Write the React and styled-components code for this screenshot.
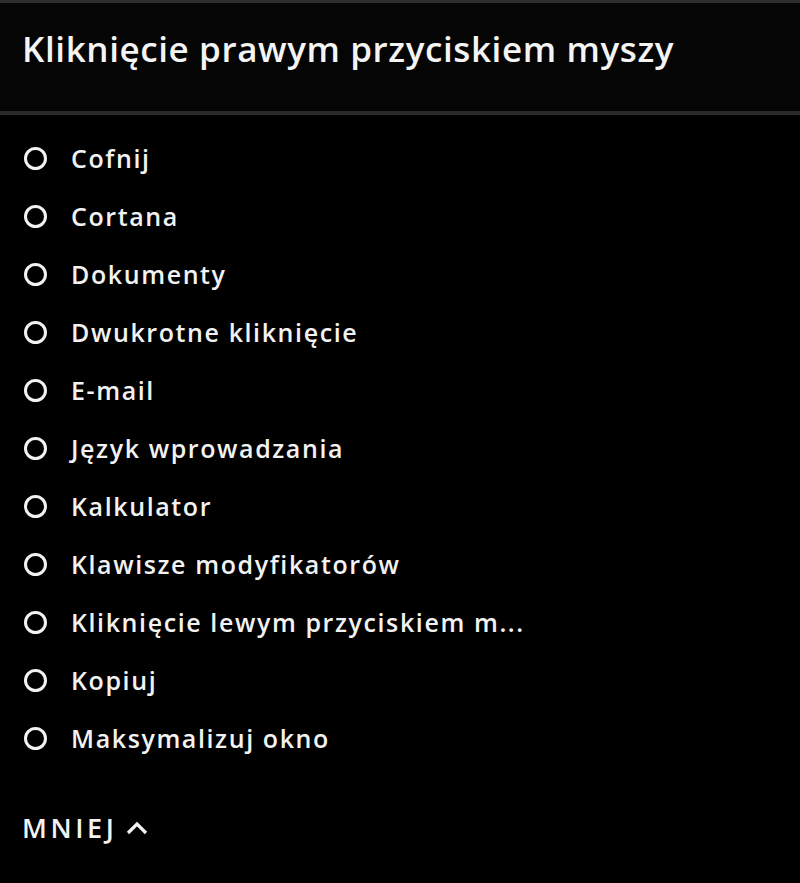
import React from 'react';
import styled, { createGlobalStyle } from 'styled-components';

const GlobalStyle = createGlobalStyle`
  html, body {
    margin: 0;
    padding: 0;
    background: #000000;
  }
  body {
    font-family: "Open Sans", Lato, sans-serif;
    color: #f2f2f2;
  }
`;

const Panel = styled.div`
  width: 800px;
  height: 883px;
  background: #000000;
  border-top: 3px solid #2e2e2e;
  box-sizing: border-box;
  display: flex;
  flex-direction: column;
`;

const Header = styled.div`
  height: 108px;
  background: #050505;
  border-bottom: 4px solid #2a2a2a;
  display: flex;
  align-items: center;
  padding: 0 22px;
  box-sizing: content-box;
`;

const Title = styled.h1`
  margin: -17px 0 0;
  font-size: 35px;
  font-weight: 600;
  color: #f4f4f4;
  letter-spacing: 0.6px;
`;

const List = styled.ul`
  list-style: none;
  margin: 0;
  padding: 14px 0 0 24px;
  display: flex;
  flex-direction: column;
`;

const Item = styled.li`
  height: 58px;
  display: flex;
  align-items: center;
  gap: 24px;
  font-size: 25px;
  font-weight: 600;
  letter-spacing: 1.6px;
  color: #f2f2f2;
`;

const Radio = styled.span`
  width: 17px;
  height: 17px;
  border: 3px solid #f2f2f2;
  border-radius: 50%;
  flex: none;
`;

const Toggle = styled.button`
  margin: 42px 0 0 22px;
  padding: 0;
  background: none;
  border: none;
  color: #f2f2f2;
  font-family: "Open Sans", Lato, sans-serif;
  font-size: 27px;
  font-weight: 600;
  letter-spacing: 3.6px;
  display: flex;
  align-items: center;
  gap: 9px;
  align-self: flex-start;
`;

const items = [
  'Cofnij',
  'Cortana',
  'Dokumenty',
  'Dwukrotne kliknięcie',
  'E-mail',
  'Język wprowadzania',
  'Kalkulator',
  'Klawisze modyfikatorów',
  'Kliknięcie lewym przyciskiem m...',
  'Kopiuj',
  'Maksymalizuj okno',
];

export default function App() {
  return (
    <>
      <GlobalStyle />
      <Panel>
        <Header>
          <Title>Kliknięcie prawym przyciskiem myszy</Title>
        </Header>
        <List>
          {items.map(label => (
            <Item key={label}>
              <Radio />
              {label}
            </Item>
          ))}
        </List>
        <Toggle>
          MNIEJ
          <svg width="22" height="14" viewBox="0 0 22 14" fill="none">
            <path d="M2 12 L11 3 L20 12" stroke="#f2f2f2" strokeWidth="3.2" />
          </svg>
        </Toggle>
      </Panel>
    </>
  );
}
